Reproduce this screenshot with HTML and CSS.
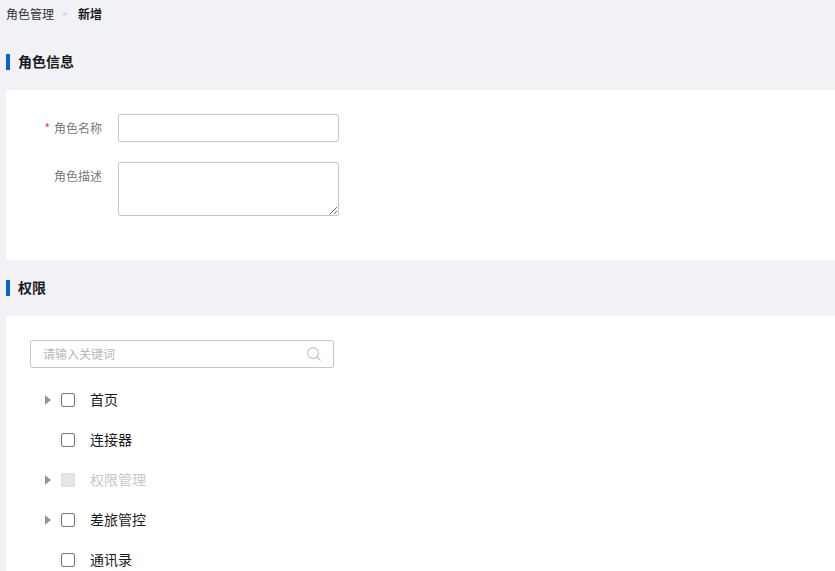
FILE: index.html
```html
<!DOCTYPE html>
<html lang="zh-CN">
<head>
<meta charset="utf-8">
<title>新增角色</title>
<link rel="stylesheet" href="styles.css">
</head>
<body>
<div class="page">
  <nav class="crumbs"><span>角色管理</span><span class="sep">&gt;</span><strong>新增</strong></nav>
  <h2 class="section-title first"><span class="title-text">角色信息</span></h2>
  <section class="card info">
    <div class="field">
      <label class="label"><span class="req">*</span>角色名称</label>
      <input class="input" type="text">
    </div>
    <div class="field">
      <label class="label">角色描述</label>
      <textarea class="textarea"></textarea>
    </div>
  </section>
  <h2 class="section-title"><span class="title-text">权限</span></h2>
  <section class="card perms">
    <div class="search">
      <span class="placeholder">请输入关键词</span>
      <svg class="search-icon" width="16" height="16" viewBox="0 0 16 16" fill="none" stroke="#bfbfbf" stroke-width="1.1"><circle cx="7" cy="7" r="5.4"/><path d="M11 11l3.6 3.6"/></svg>
    </div>
    <ul class="tree">
      <li class="row"><span class="arrow"></span><span class="check"></span><span class="name">首页</span></li>
      <li class="row"><span class="arrow none"></span><span class="check"></span><span class="name">连接器</span></li>
      <li class="row disabled"><span class="arrow"></span><span class="check"></span><span class="name">权限管理</span></li>
      <li class="row"><span class="arrow"></span><span class="check"></span><span class="name">差旅管控</span></li>
      <li class="row"><span class="arrow none"></span><span class="check"></span><span class="name">通讯录</span></li>
    </ul>
  </section>
</div>
</body>
</html>
```
FILE: styles.css
```css
* { box-sizing: border-box; }
html, body { margin: 0; height: 100%; overflow: hidden; }
body {
  background: #f0f2f5;
  font-family: "Noto Sans CJK SC", "Liberation Sans", sans-serif;
  font-size: 12px;
  color: #1a1a1a;
}
.page { padding-left: 6px; }
.crumbs {
  display: flex;
  align-items: center;
  height: 30px;
  padding-bottom: 2px;
  font-size: 12px;
  line-height: 28px;
  color: #333;
}
.crumbs .sep { margin: 0 9px 0 8px; color: #c8c8c8; width: 7px; font-size: 10px; }
.crumbs strong { font-weight: 700; color: #1a1a1a; }
.section-title {
  margin: 0;
  height: 56px;
  display: flex;
  align-items: center;
  font-size: 14px;
  font-weight: 700;
  color: #1a1a1a;
}
.section-title::before {
  content: "";
  width: 4px;
  height: 16px;
  margin-right: 8px;
  background: #0064d2;
}
.title-text { padding-bottom: 2px; }
.section-title.first { height: 60px; padding-top: 4px; }
.card { background: #fff; }
.info { height: 170px; padding-top: 24px; }
.field { display: flex; align-items: flex-start; margin-bottom: 20px; }
.label {
  width: 96px;
  margin-right: 16px;
  text-align: right;
  line-height: 28px;
  color: #7a7a7a;
}
.req { color: #e0434b; margin-right: 4px; }
.input, .textarea {
  display: block;
  width: 221px;
  border: 1px solid #c8c8c8;
  border-radius: 2px;
  background: #fff;
  outline: none;
  padding: 4px 8px;
  font: inherit;
}
.input { height: 28px; }
.textarea { height: 54px; resize: vertical; }
.perms { padding: 24px 0 0 24px; }
.search {
  display: flex;
  align-items: center;
  justify-content: space-between;
  width: 304px;
  height: 28px;
  padding: 0 11px 0 12px;
  border: 1px solid #c8c8c8;
  border-radius: 2px;
}
.placeholder { color: #b8b8b8; font-size: 12px; padding-bottom: 2px; }
.search-icon { flex: none; }
.tree { list-style: none; margin: 12px 0 0; padding: 0; }
.row { display: flex; align-items: center; height: 40px; font-size: 14px; color: #1a1a1a; }
.name { padding-bottom: 2px; }
.arrow {
  width: 0;
  height: 0;
  margin: 0 10px 0 15px;
  border-style: solid;
  border-width: 5px 0 5px 6px;
  border-color: transparent transparent transparent #969696;
}
.arrow.none { border-color: transparent; }
.check {
  width: 14px;
  height: 14px;
  margin-right: 15px;
  border: 1px solid #767676;
  border-radius: 2px;
  background: #fff;
}
.disabled .check { background: #e6e6e6; border-color: #e0e0e0; }
.disabled .name { color: #c8c8c8; }
```
